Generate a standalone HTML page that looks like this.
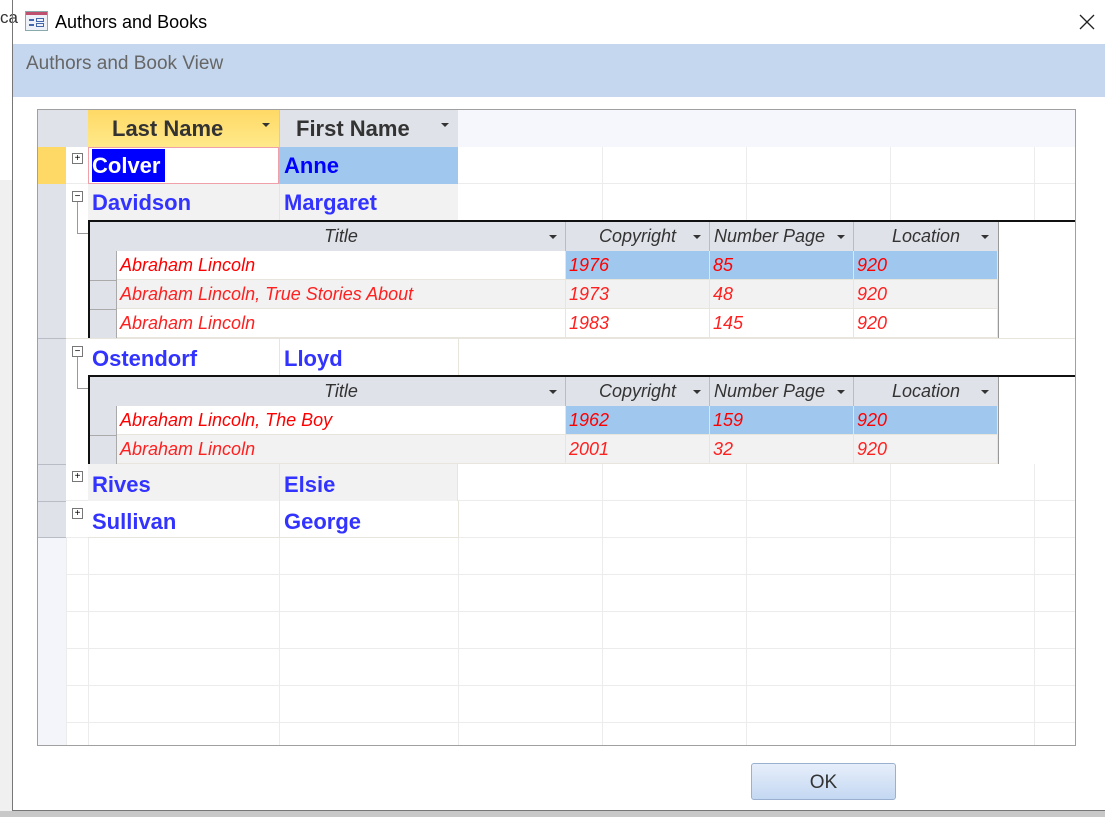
<!DOCTYPE html>
<html><head><meta charset="utf-8"><style>
*{margin:0;padding:0;box-sizing:border-box}
body{width:1105px;height:817px;position:relative;overflow:hidden;background:#fff;font-family:"Liberation Sans",sans-serif}
.a{position:absolute}
.hl{position:absolute;height:1px;background:#ececec}
.vl{position:absolute;width:1px;background:#ececec}
.nm{position:absolute;font-weight:bold;font-size:22px;color:#3333ff;line-height:37px;padding-left:4px;white-space:nowrap}
.sh{position:absolute;font-style:italic;font-size:18px;color:#333;line-height:29px;text-align:center;background:#dfe2e8;border-right:1px solid #b8bcc4;overflow:hidden;white-space:nowrap}
.sc{position:absolute;font-style:italic;font-size:18px;color:#ff2020;line-height:29px;padding-left:3px;white-space:nowrap;border-right:1px solid #e8e6dc;border-bottom:1px solid #e8e6dc}
.arr{position:absolute;width:0;height:0;border-left:4px solid transparent;border-right:4px solid transparent;border-top:4px solid #333}
.box{position:absolute;width:11px;height:11px;border:1px solid #777;background:#fff;font-size:10px;line-height:9px;text-align:center;color:#000}
</style></head><body>
<div class="a" style="left:0;top:0;width:13px;height:817px;background:#f0f0f0"></div>
<div class="a" style="left:0;top:0;width:13px;height:180px;background:#fff"></div>
<div class="a" style="left:0;top:8px;font-size:17px;color:#333">ca</div>
<div class="a" style="left:0;top:811px;width:1105px;height:6px;background:#c8c8c8"></div>
<div class="a" style="left:12px;top:0;width:1px;height:811px;background:#777"></div>
<div class="a" style="left:12px;top:810px;width:1093px;height:1px;background:#777"></div>
<div class="a" style="left:25px;top:11px;width:23px;height:20px;border:1px solid #8aa;background:#eef2f8"><div class="a" style="left:0;top:0;width:21px;height:3px;background:#c05070"></div><div class="a" style="left:3px;top:7px;width:5px;height:2px;background:#46a"></div><div class="a" style="left:3px;top:12px;width:5px;height:2px;background:#46a"></div><div class="a" style="left:10px;top:6px;width:8px;height:4px;border:1px solid #46a"></div><div class="a" style="left:10px;top:11px;width:8px;height:4px;border:1px solid #46a"></div></div>
<div class="a" style="left:55px;top:12px;font-size:18px;color:#000">Authors and Books</div>
<svg class="a" style="left:1079px;top:14px" width="16" height="16"><path d="M1 1L15 15M15 1L1 15" stroke="#222" stroke-width="1.3"/></svg>
<div class="a" style="left:13px;top:44px;width:1092px;height:53px;background:#c5d7ee"></div>
<div class="a" style="left:26px;top:53px;font-size:19px;color:#666">Authors and Book View</div>
<div class="a" style="left:37px;top:109px;width:1039px;height:637px;border:1px solid #a0a0a0;background:#fff;overflow:hidden"></div>
<div class="vl" style="left:602px;top:110px;height:111px"></div>
<div class="vl" style="left:746px;top:110px;height:111px"></div>
<div class="vl" style="left:890px;top:110px;height:111px"></div>
<div class="vl" style="left:1034px;top:110px;height:111px"></div>
<div class="vl" style="left:602px;top:464px;height:281px"></div>
<div class="vl" style="left:746px;top:464px;height:281px"></div>
<div class="vl" style="left:890px;top:464px;height:281px"></div>
<div class="vl" style="left:1034px;top:464px;height:281px"></div>
<div class="vl" style="left:88px;top:538px;height:207px"></div>
<div class="vl" style="left:279px;top:538px;height:207px"></div>
<div class="vl" style="left:458px;top:538px;height:207px"></div>
<div class="vl" style="left:66px;top:538px;height:207px"></div>
<div class="a" style="left:458px;top:110px;width:617px;height:37px;background:#f6f7fc"></div>
<div class="hl" style="left:38px;top:183px;width:1037px"></div>
<div class="hl" style="left:38px;top:500px;width:1037px"></div>
<div class="hl" style="left:38px;top:537px;width:1037px"></div>
<div class="hl" style="left:38px;top:574px;width:1037px"></div>
<div class="hl" style="left:38px;top:611px;width:1037px"></div>
<div class="hl" style="left:38px;top:648px;width:1037px"></div>
<div class="hl" style="left:38px;top:685px;width:1037px"></div>
<div class="hl" style="left:38px;top:722px;width:1037px"></div>
<div class="a" style="left:38px;top:110px;width:50px;height:37px;background:#dfe2e8"></div>
<div class="a" style="left:38px;top:147px;width:28px;height:37px;background:#ffd966"></div>
<div class="a" style="left:38px;top:184px;width:28px;height:354px;background:#dfe2e8;border-bottom:1px solid #b8bcc4"></div>
<div class="hl" style="left:38px;top:338px;width:28px;background:#b8bcc4"></div>
<div class="hl" style="left:38px;top:464px;width:28px;background:#b8bcc4"></div>
<div class="hl" style="left:38px;top:501px;width:28px;background:#b8bcc4"></div>
<div class="a" style="left:38px;top:538px;width:28px;height:207px;background:#f3f5fb"></div>
<div class="a" style="left:88px;top:110px;width:191px;height:37px;background:linear-gradient(#ffd966,#ffe98a);font-weight:bold;font-size:22px;color:#333;line-height:37px;padding-left:24px">Last Name</div>
<div class="arr" style="left:262px;top:123px"></div>
<div class="a" style="left:279px;top:110px;width:179px;height:37px;background:#dfe2e8;font-weight:bold;font-size:22px;color:#333;line-height:37px;padding-left:16px;border-left:1px solid #c8ccd4">First Name</div>
<div class="arr" style="left:441px;top:123px"></div>
<div class="a" style="left:88px;top:147px;width:191px;height:37px;border:1px solid #f0a0a8;background:#fff"></div>
<div class="a" style="left:92px;top:149px;height:33px;width:73px;background:#0000ff"></div>
<div class="nm" style="left:88px;top:147px;color:#fff">Colver</div>
<div class="a" style="left:279px;top:147px;width:179px;height:37px;background:#a0c8ee"></div>
<div class="nm" style="left:280px;top:147px;color:#0000ff">Anne</div>
<div class="box" style="left:72px;top:153px">+</div>
<div class="a" style="left:88px;top:184px;width:370px;height:37px;background:#f2f2f2"></div>
<div class="vl" style="left:279px;top:184px;height:37px;background:#e8e6dc"></div>
<div class="nm" style="left:88px;top:184px">Davidson</div>
<div class="nm" style="left:280px;top:184px">Margaret</div>
<div class="box" style="left:72px;top:191px">−</div>
<div class="a" style="left:77px;top:202px;width:11px;height:32px;border-left:1px solid #999;border-bottom:1px solid #999"></div>
<div class="a" style="left:88px;top:220px;width:987px;height:2px;background:#111"></div>
<div class="a" style="left:88px;top:220px;width:2px;height:118px;background:#111"></div>
<div class="a" style="left:90px;top:222px;width:27px;height:29px;background:#dfe2e8"></div>
<div class="sh" style="left:117px;top:222px;width:449px;height:29px">Title</div>
<div class="sh" style="left:566px;top:222px;width:144px;height:29px">Copyright</div>
<div class="sh" style="left:710px;top:222px;width:144px;height:29px;text-align:left;padding-left:4px"><span style="display:inline-block;width:120px;overflow:hidden">Number Page</span></div>
<div class="sh" style="left:854px;top:222px;width:145px;height:29px">Location</div>
<div class="arr" style="left:549px;top:235px"></div><div class="arr" style="left:693px;top:235px"></div><div class="arr" style="left:837px;top:235px"></div><div class="arr" style="left:981px;top:235px"></div>
<div class="a" style="left:90px;top:251px;width:27px;height:87px;background:#dfe2e8"></div>
<div class="hl" style="left:90px;top:280px;width:27px;background:#aaa"></div>
<div class="hl" style="left:90px;top:309px;width:27px;background:#aaa"></div>
<div class="vl" style="left:116px;top:251px;height:87px;background:#aaa"></div>
<div class="vl" style="left:998px;top:222px;height:116px;background:#999"></div>
<div class="sc" style="left:117px;top:251px;width:449px;height:29px;color:#f00;background:#fff">Abraham Lincoln</div>
<div class="sc" style="left:566px;top:251px;width:144px;height:29px;color:#f00;background:#a0c8ee">1976</div>
<div class="sc" style="left:710px;top:251px;width:144px;height:29px;color:#f00;background:#a0c8ee">85</div>
<div class="sc" style="left:854px;top:251px;width:144px;height:29px;color:#f00;background:#a0c8ee">920</div>
<div class="sc" style="left:117px;top:280px;width:449px;height:29px;background:#f2f2f2">Abraham Lincoln, True Stories About</div>
<div class="sc" style="left:566px;top:280px;width:144px;height:29px;background:#f2f2f2">1973</div>
<div class="sc" style="left:710px;top:280px;width:144px;height:29px;background:#f2f2f2">48</div>
<div class="sc" style="left:854px;top:280px;width:144px;height:29px;background:#f2f2f2">920</div>
<div class="sc" style="left:117px;top:309px;width:449px;height:29px;background:#fff">Abraham Lincoln</div>
<div class="sc" style="left:566px;top:309px;width:144px;height:29px;background:#fff">1983</div>
<div class="sc" style="left:710px;top:309px;width:144px;height:29px;background:#fff">145</div>
<div class="sc" style="left:854px;top:309px;width:144px;height:29px;background:#fff">920</div>
<div class="a" style="left:66px;top:338px;width:1009px;height:1px;background:#e8e6dc"></div>
<div class="vl" style="left:279px;top:338px;height:37px;background:#e8e6dc"></div>
<div class="vl" style="left:458px;top:338px;height:37px;background:#e8e6dc"></div>
<div class="nm" style="left:88px;top:340px">Ostendorf</div>
<div class="nm" style="left:280px;top:340px">Lloyd</div>
<div class="box" style="left:72px;top:346px">−</div>
<div class="a" style="left:77px;top:357px;width:11px;height:32px;border-left:1px solid #999;border-bottom:1px solid #999"></div>
<div class="a" style="left:88px;top:375px;width:987px;height:2px;background:#111"></div>
<div class="a" style="left:88px;top:375px;width:2px;height:89px;background:#111"></div>
<div class="a" style="left:90px;top:377px;width:27px;height:29px;background:#dfe2e8"></div>
<div class="sh" style="left:117px;top:377px;width:449px;height:29px">Title</div>
<div class="sh" style="left:566px;top:377px;width:144px;height:29px">Copyright</div>
<div class="sh" style="left:710px;top:377px;width:144px;height:29px;text-align:left;padding-left:4px"><span style="display:inline-block;width:120px;overflow:hidden">Number Page</span></div>
<div class="sh" style="left:854px;top:377px;width:145px;height:29px">Location</div>
<div class="arr" style="left:549px;top:390px"></div><div class="arr" style="left:693px;top:390px"></div><div class="arr" style="left:837px;top:390px"></div><div class="arr" style="left:981px;top:390px"></div>
<div class="a" style="left:90px;top:406px;width:27px;height:58px;background:#dfe2e8"></div>
<div class="hl" style="left:90px;top:435px;width:27px;background:#aaa"></div>
<div class="vl" style="left:116px;top:406px;height:58px;background:#aaa"></div>
<div class="vl" style="left:998px;top:377px;height:87px;background:#999"></div>
<div class="sc" style="left:117px;top:406px;width:449px;height:29px;color:#f00;background:#fff">Abraham Lincoln, The Boy</div>
<div class="sc" style="left:566px;top:406px;width:144px;height:29px;color:#f00;background:#a0c8ee">1962</div>
<div class="sc" style="left:710px;top:406px;width:144px;height:29px;color:#f00;background:#a0c8ee">159</div>
<div class="sc" style="left:854px;top:406px;width:144px;height:29px;color:#f00;background:#a0c8ee">920</div>
<div class="sc" style="left:117px;top:435px;width:449px;height:29px;background:#f2f2f2">Abraham Lincoln</div>
<div class="sc" style="left:566px;top:435px;width:144px;height:29px;background:#f2f2f2">2001</div>
<div class="sc" style="left:710px;top:435px;width:144px;height:29px;background:#f2f2f2">32</div>
<div class="sc" style="left:854px;top:435px;width:144px;height:29px;background:#f2f2f2">920</div>
<div class="a" style="left:88px;top:464px;width:370px;height:37px;background:#f2f2f2;border-right:1px solid #e8e6dc"></div>
<div class="vl" style="left:279px;top:464px;height:74px;background:#e8e6dc"></div>
<div class="nm" style="left:88px;top:466px">Rives</div>
<div class="nm" style="left:280px;top:466px">Elsie</div>
<div class="box" style="left:72px;top:471px">+</div>
<div class="a" style="left:88px;top:501px;width:371px;height:37px;border-right:1px solid #e8e6dc;border-bottom:1px solid #e8e6dc"></div>
<div class="nm" style="left:88px;top:503px">Sullivan</div>
<div class="nm" style="left:280px;top:503px">George</div>
<div class="box" style="left:72px;top:508px">+</div>
<div class="a" style="left:751px;top:763px;width:145px;height:37px;border:1px solid #9ab0d0;border-radius:3px;background:linear-gradient(#e6eefa,#c4d8f2);text-align:center;line-height:37px;font-size:19px;color:#333">OK</div>
</body></html>
